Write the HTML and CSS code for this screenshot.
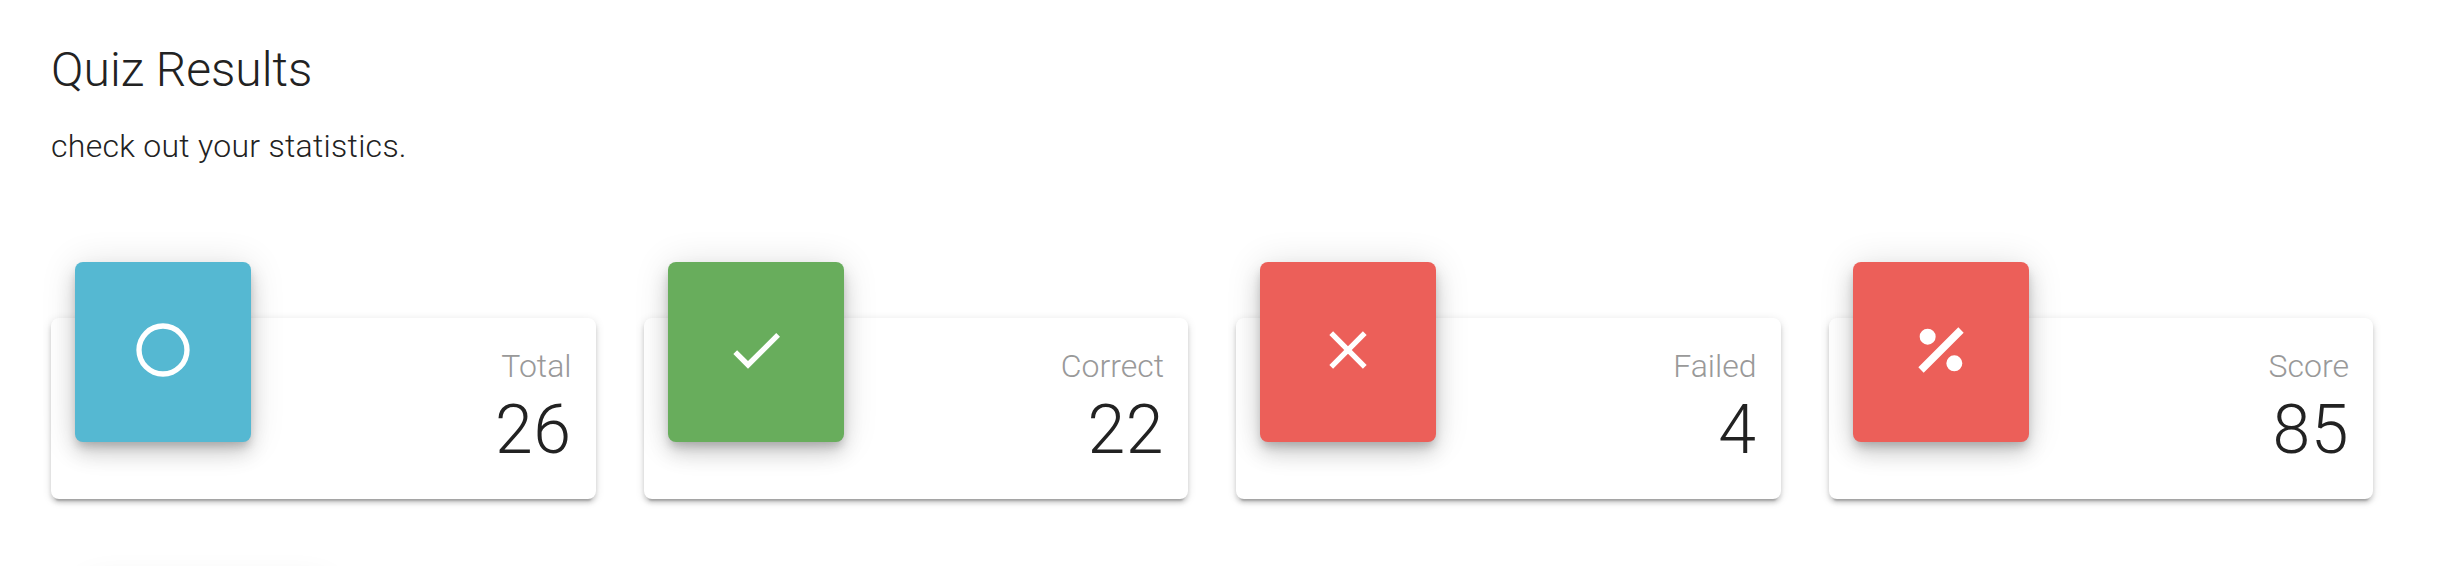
FILE: index.html
```html
<!DOCTYPE html>
<html lang="en">
<head>
<meta charset="utf-8">
<title>Quiz Results</title>
<link rel="stylesheet" href="styles.css">
</head>
<body>
<main class="page">
  <header class="intro">
    <h1 class="title">Quiz Results</h1>
    <p class="subtitle">check out your statistics.</p>
  </header>
  <section class="stats">
    <article class="card">
      <div class="tile tile-info"><svg class="icon" viewBox="0 0 24 24"><path d="M12 20a8 8 0 0 1-8-8 8 8 0 0 1 8-8 8 8 0 0 1 8 8 8 8 0 0 1-8 8m0-18A10 10 0 0 0 2 12a10 10 0 0 0 10 10 10 10 0 0 0 10-10A10 10 0 0 0 12 2z"/></svg></div>
      <div class="figures"><div class="label">Total</div><div class="value">26</div></div>
    </article>
    <article class="card">
      <div class="tile tile-success"><svg class="icon" viewBox="0 0 24 24"><path d="M21 7L9 19l-5.5-5.5 1.41-1.41L9 16.17 19.59 5.59 21 7z"/></svg></div>
      <div class="figures"><div class="label">Correct</div><div class="value">22</div></div>
    </article>
    <article class="card">
      <div class="tile tile-error"><svg class="icon" viewBox="0 0 24 24"><path d="M19 6.41L17.59 5 12 10.59 6.41 5 5 6.41 10.59 12 5 17.59 6.41 19 12 13.41 17.59 19 19 17.59 13.41 12 19 6.41z"/></svg></div>
      <div class="figures"><div class="label">Failed</div><div class="value">4</div></div>
    </article>
    <article class="card">
      <div class="tile tile-error"><svg class="icon" viewBox="0 0 24 24"><path d="M18.5 3.5l-15 15 2 2 15-15M7 4a3 3 0 0 0-3 3 3 3 0 0 0 3 3 3 3 0 0 0 3-3 3 3 0 0 0-3-3m10 10a3 3 0 0 0-3 3 3 3 0 0 0 3 3 3 3 0 0 0 3-3 3 3 0 0 0-3-3z"/></svg></div>
      <div class="figures"><div class="label">Score</div><div class="value">85</div></div>
    </article>
  </section>
  <div class="next-panel"></div>
</main>
</body>
</html>
```
FILE: styles.css
```css
* {
  box-sizing: border-box;
}

body {
  margin: 0;
  background: #fff;
  color: #222;
  font-family: Roboto, sans-serif;
  font-weight: 300;
}

.page {
  height: 566px;
  padding: 38px 85px 0 51px;
  overflow: hidden;
}

.intro {
  height: 280px;
}

.title {
  margin: 0;
  font-size: 48px;
  font-weight: 300;
  line-height: 64px;
}

.subtitle {
  margin: 16px 0 0;
  font-size: 32px;
  line-height: 56px;
  letter-spacing: 0.28px;
}

.stats {
  display: grid;
  grid-template-columns: repeat(4, 1fr);
  gap: 48px;
}

.card {
  display: flex;
  justify-content: space-between;
  height: 181px;
  padding: 0 24px;
  border-radius: 8px;
  background: #fff;
  box-shadow: 0 6px 2px -4px rgba(0, 0, 0, 0.2), 0 4px 4px rgba(0, 0, 0, 0.14), 0 2px 10px rgba(0, 0, 0, 0.12);
}

.tile {
  display: flex;
  align-items: center;
  justify-content: center;
  width: 176px;
  height: 180px;
  margin-top: -56px;
  padding-bottom: 4px;
  border-radius: 8px;
  box-shadow: 0 6px 10px -2px rgba(0, 0, 0, 0.2), 0 12px 20px rgba(0, 0, 0, 0.14), 0 2px 36px rgba(0, 0, 0, 0.12);
}

.tile-info {
  background: #55b8d2;
}

.tile-success {
  background: #68ad5c;
}

.tile-error {
  background: #ec5f59;
}

.icon {
  width: 64px;
  height: 64px;
  fill: #fff;
}

.figures {
  padding-top: 24px;
  text-align: right;
}

.label {
  color: #999;
  font-size: 32px;
  line-height: 48px;
}

.value {
  font-size: 68px;
  line-height: 80px;
  letter-spacing: 0.5px;
}

.next-panel {
  width: 240px;
  height: 180px;
  margin: 86px 0 0 36px;
  border-radius: 8px;
  box-shadow: 0 2px 36px rgba(0, 0, 0, 0.12);
}
```
